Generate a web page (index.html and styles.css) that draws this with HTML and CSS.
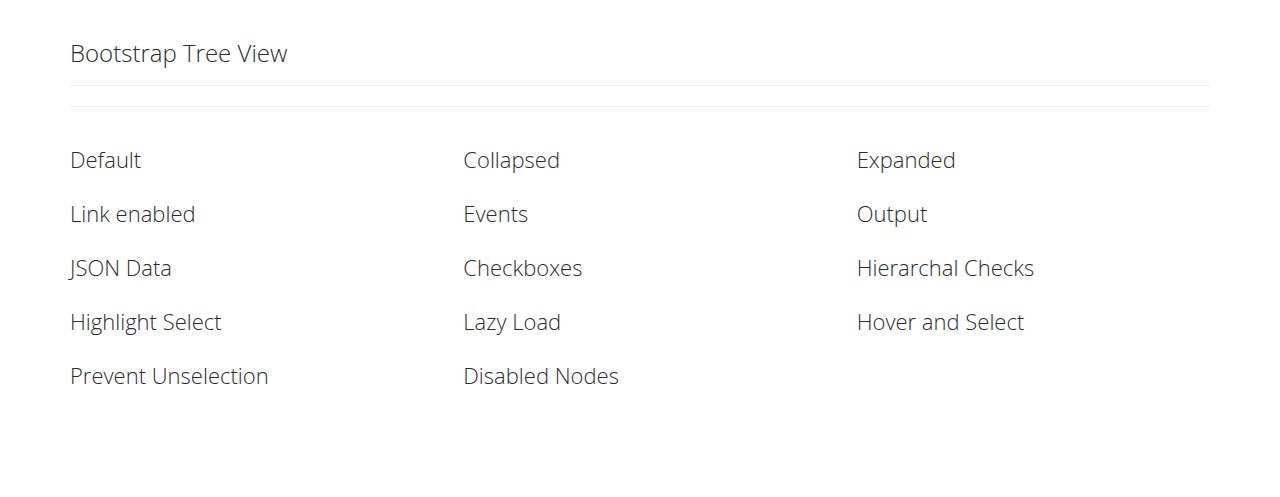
FILE: index.html
```html
<!DOCTYPE html>
<html lang="en">
<head>
<meta charset="utf-8">
<title>Bootstrap Tree View</title>
<link rel="stylesheet" href="styles.css">
</head>
<body>
<div class="container">
  <header class="page-header">
    <h1 class="title">Bootstrap Tree View</h1>
  </header>
  <hr class="divider">
  <div class="examples">
    <h2 class="example">Default</h2>
    <h2 class="example">Collapsed</h2>
    <h2 class="example">Expanded</h2>
    <h2 class="example">Link enabled</h2>
    <h2 class="example">Events</h2>
    <h2 class="example">Output</h2>
    <h2 class="example">JSON Data</h2>
    <h2 class="example">Checkboxes</h2>
    <h2 class="example">Hierarchal Checks</h2>
    <h2 class="example">Highlight Select</h2>
    <h2 class="example">Lazy Load</h2>
    <h2 class="example">Hover and Select</h2>
    <h2 class="example">Prevent Unselection</h2>
    <h2 class="example">Disabled Nodes</h2>
  </div>
</div>
</body>
</html>
```
FILE: styles.css
```css
html, body {
  margin: 0;
  padding: 0;
  background: #fff;
}
body {
  font-family: "Open Sans", "Liberation Sans", sans-serif;
  font-weight: 300;
  color: #2b2b2b;
}
.container {
  width: 1140px;
  margin: 0 auto;
  padding-top: 39px;
}
.page-header {
  border-bottom: 1px solid #eee;
  padding-bottom: 18px;
}
.title {
  margin: 0;
  font-size: 24px;
  line-height: 28px;
  font-weight: 300;
}
.divider {
  margin: 20px 0 40px;
  border: 0;
  border-top: 1px solid #eee;
  height: 0;
}
.examples {
  display: grid;
  grid-template-columns: repeat(3, 393.33px);
  row-gap: 30px;
}
.example {
  margin: 0;
  font-size: 22px;
  line-height: 24px;
  font-weight: 300;
}
```
